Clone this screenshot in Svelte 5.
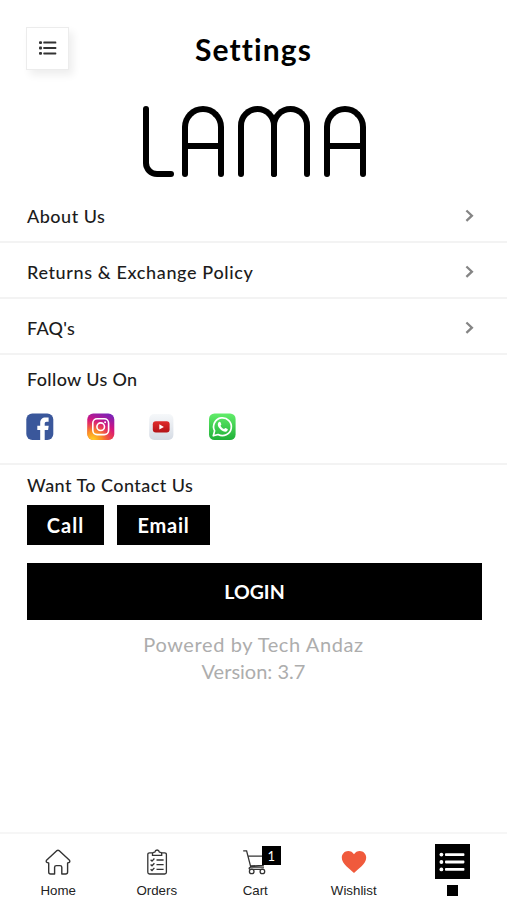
<script lang="ts">
	type Tab = { id: string; label: string; badge?: number };

	const links = [
		{ id: 'about', label: 'About Us' },
		{ id: 'returns', label: 'Returns & Exchange Policy' },
		{ id: 'faq', label: "FAQ's" }
	];

	const tabs: Tab[] = [
		{ id: 'home', label: 'Home' },
		{ id: 'orders', label: 'Orders' },
		{ id: 'cart', label: 'Cart', badge: 1 },
		{ id: 'wishlist', label: 'Wishlist' },
		{ id: 'settings', label: '' }
	];

	let activeTab = $state('settings');
</script>

<div class="screen">
	<header class="header">
		<button type="button" class="menu-btn" aria-label="Menu">
			<svg width="18" height="14" viewBox="0 0 18 14" fill="#333">
				<rect x="0" y="0.2" width="3" height="2.8" rx="1" />
				<rect x="4.3" y="0.6" width="13" height="2" rx="0.6" />
				<rect x="0" y="5.6" width="3" height="2.8" rx="1" />
				<rect x="4.3" y="6" width="13" height="2" rx="0.6" />
				<rect x="0" y="11" width="3" height="2.8" rx="1" />
				<rect x="4.3" y="11.4" width="13" height="2" rx="0.6" />
			</svg>
		</button>
		<h1 class="title">Settings</h1>
	</header>

	<div class="logo" role="img" aria-label="LAMA">
		<span class="hook"></span>
		<span class="arch barred"></span>
		<span class="double"><span class="arch narrow"></span><span class="arch narrow"></span></span>
		<span class="arch barred"></span>
	</div>

	<nav class="links">
		{#each links as link (link.id)}
			<button type="button" class="link-row">
				<span class="label link-{link.id}">{link.label}</span>
				<svg width="9" height="14" viewBox="0 0 9 14">
					<path d="M1.4 1.5 L6.9 6.7 L1.4 11.9" fill="none" stroke="#858585" stroke-width="2.3" />
				</svg>
			</button>
		{/each}
	</nav>

	<section class="follow">
		<h2 class="label follow-title">Follow Us On</h2>
		<div class="socials">
			<svg width="28" height="28" viewBox="0 0 28 28" aria-label="Facebook">
				<rect x="0.3" y="0.5" width="27" height="26.5" rx="6" fill="#3a579b" />
				<path
					d="M14.2 27 V17 H11.3 V12.8 H14.2 V10.2 C14.2 6.6 16.2 4.6 19.6 4.6 H22.6 V8.8 H20.6 C19.2 8.8 18.7 9.5 18.7 10.8 V12.8 H22.7 L22.1 17 H18.7 V27 Z"
					fill="#fff"
				/>
			</svg>
			<svg width="28" height="28" viewBox="0 0 28 28" aria-label="Instagram">
				<defs>
					<linearGradient id="ig-base" x1="0.75" y1="0" x2="0.35" y2="1">
						<stop offset="0" stop-color="#7a22b8" />
						<stop offset="0.45" stop-color="#d3147f" />
						<stop offset="1" stop-color="#f5582a" />
					</linearGradient>
					<radialGradient id="ig-glow" cx="0.2" cy="1" r="0.85">
						<stop offset="0" stop-color="#ffd428" />
						<stop offset="0.4" stop-color="#fd9a20" stop-opacity="0.85" />
						<stop offset="1" stop-color="#f02a60" stop-opacity="0" />
					</radialGradient>
				</defs>
				<rect x="0.3" y="0.5" width="27" height="26.5" rx="6" fill="url(#ig-base)" />
				<rect x="0.3" y="0.5" width="27" height="26.5" rx="6" fill="url(#ig-glow)" />
				<g fill="none" stroke="#fff" stroke-width="1.6">
					<rect x="5.8" y="5.8" width="15.8" height="15.8" rx="4.3" />
					<circle cx="13.7" cy="13.7" r="3.8" />
				</g>
				<circle cx="18.1" cy="9.2" r="1" fill="#fff" />
			</svg>
			<svg width="28" height="28" viewBox="0 0 28 28" aria-label="YouTube">
				<defs>
					<linearGradient id="yt-base" x1="0" y1="0" x2="0" y2="1">
						<stop offset="0" stop-color="#f6f8fa" />
						<stop offset="1" stop-color="#d5dbe4" />
					</linearGradient>
					<linearGradient id="yt-red" x1="0" y1="0" x2="0" y2="1">
						<stop offset="0" stop-color="#e02c2c" />
						<stop offset="1" stop-color="#b31217" />
					</linearGradient>
				</defs>
				<rect x="1.2" y="1" width="24.2" height="26" rx="5" fill="url(#yt-base)" />
				<rect x="4.8" y="8.2" width="16.8" height="11.4" rx="3" fill="url(#yt-red)" />
				<path d="M11.3 11.2 L15.9 13.9 L11.3 16.6 Z" fill="#fff" />
			</svg>
			<svg width="28" height="28" viewBox="0 0 28 28" aria-label="WhatsApp">
				<defs>
					<linearGradient id="wa-base" x1="0" y1="0" x2="0" y2="1">
						<stop offset="0" stop-color="#62ed6a" />
						<stop offset="1" stop-color="#20b038" />
					</linearGradient>
				</defs>
				<rect x="0" y="0.5" width="26.6" height="26.5" rx="5.5" fill="url(#wa-base)" />
				<path
					d="M4.3 22.8 L5.6 17.9 A8.9 8.9 0 1 1 9.1 21.5 Z"
					fill="none"
					stroke="#fff"
					stroke-width="1.7"
					stroke-linejoin="round"
				/>
				<path
					d="M10.2 8.9 C10.8 8.6 11.3 8.8 11.5 9.3 L12.3 11.2 C12.5 11.8 11.6 12.4 11.5 12.8 C12.2 14.3 13.4 15.4 15 16 C15.5 15.9 16 14.9 16.6 15.1 L18.6 16.1 C19.1 16.4 18.6 18 17.5 18.5 C14.2 19.8 8.8 14.7 8.8 11.4 C8.8 10.3 9.4 9.2 10.2 8.9 Z"
					fill="#fff"
				/>
			</svg>
		</div>
	</section>

	<section class="contact">
		<h2 class="label contact-title">Want To Contact Us</h2>
		<div class="contact-actions">
			<button type="button" class="btn call">Call</button>
			<button type="button" class="btn email">Email</button>
		</div>
		<button type="button" class="btn login">LOGIN</button>
	</section>

	<footer class="credits">
		<p class="powered">Powered by Tech Andaz</p>
		<p class="version">Version: 3.7</p>
	</footer>

	<nav class="tabbar">
		{#each tabs as tab (tab.id)}
			<button type="button" class="tab" onclick={() => (activeTab = tab.id)}>
				<span class="tab-icon" class:filled={tab.id === 'settings'}>
					{#if tab.id === 'home'}
						<svg width="26" height="26" viewBox="0 0 26 26" fill="none" stroke="#333" stroke-width="1.4" stroke-linejoin="round">
							<path
								d="M12 1.6 Q13 0.8 14 1.6 L24.5 11.2 Q25.6 13.8 22.6 13.9 V23 Q22.6 25 20.6 25 H16.8 V18.3 Q16.8 16.6 15 16.6 H11.4 Q9.6 16.6 9.6 18.3 V25 H5.6 Q3.7 25 3.7 23 V13.9 Q0.4 13.8 1.5 11.2 Z"
							/>
						</svg>
					{:else if tab.id === 'orders'}
						<svg width="26" height="26" viewBox="0 0 26 26" fill="none" stroke="#333" stroke-width="1.3">
							<path d="M8.5 3.8 H5.6 Q3.8 3.8 3.8 5.6 V23.2 Q3.8 25 5.6 25 H20.6 Q22.4 25 22.4 23.2 V5.6 Q22.4 3.8 20.6 3.8 H17.7" />
							<path d="M8.5 6.4 V4.8 Q8.5 3.2 10.8 3.2 Q11.2 1 13.1 1 Q15 1 15.4 3.2 Q17.7 3.2 17.7 4.8 V6.4 Z" />
							<path d="M12.5 11 H19.6 M12.5 15.7 H19.6 M12.5 20.4 H19.6" />
							<path d="M6.6 10.8 L8 12.1 L10.4 9.5 M6.6 15.5 L8 16.8 L10.4 14.2 M6.6 20.2 L8 21.5 L10.4 18.9" />
						</svg>
					{:else if tab.id === 'cart'}
						<svg width="26" height="26" viewBox="0 0 26 26" fill="none" stroke="#333" stroke-width="1.3">
							<path d="M1.2 1.8 H4.6 L8.8 18.2 H22 M5.8 7.2 H24.2 L21.2 16.4 L8.4 17 M8.8 18.2 Q7 18.4 7.2 19.8 Q7.4 20.4 8.8 20.4 H22" />
							<circle cx="9.7" cy="22.4" r="2.3" />
							<circle cx="20.4" cy="22.4" r="2.3" />
						</svg>
					{:else if tab.id === 'wishlist'}
						<svg width="26" height="26" viewBox="0 0 26 26">
							<path
								d="M13 24 C9 20.2 0.8 15 0.8 8.8 C0.8 4.8 3.7 2 7.2 2 C9.6 2 11.8 3.2 13 5.3 C14.2 3.2 16.4 2 18.8 2 C22.3 2 25.2 4.8 25.2 8.8 C25.2 15 17 20.2 13 24 Z"
								fill="#f05a3c"
							/>
						</svg>
					{:else}
						<svg width="26" height="20" viewBox="0 0 26 20" fill="#fff">
							<circle cx="2.4" cy="2.6" r="1.9" />
							<rect x="6" y="1.2" width="19.4" height="2.8" rx="0.8" />
							<circle cx="2.4" cy="10" r="1.9" />
							<rect x="6" y="8.6" width="19.4" height="2.8" rx="0.8" />
							<circle cx="2.4" cy="17.4" r="1.9" />
							<rect x="6" y="16" width="19.4" height="2.8" rx="0.8" />
						</svg>
					{/if}
					{#if tab.badge}
						<span class="badge">{tab.badge}</span>
					{/if}
				</span>
				{#if tab.id === activeTab}
					<span class="marker"></span>
				{:else}
					<span class="tab-label">{tab.label}</span>
				{/if}
			</button>
		{/each}
	</nav>
</div>

<style>
	:global(body) {
		background: #fff;
	}
	.screen {
		display: flex;
		flex-direction: column;
		box-sizing: border-box;
		width: 507px;
		height: 900px;
		overflow: hidden;
		background: #fff;
		color: #1c1c1c;
		font-family: Lato, 'Open Sans', sans-serif;
	}
	button {
		margin: 0;
		padding: 0;
		border: none;
		background: none;
		color: inherit;
		font: inherit;
		cursor: pointer;
	}
	h1,
	h2,
	p {
		margin: 0;
	}
	svg {
		display: block;
		flex: none;
	}

	.header {
		display: grid;
		grid-template-columns: 43px 1fr 43px;
		align-items: start;
		padding: 27px 26px 0;
		height: 79px;
	}
	.menu-btn {
		display: flex;
		align-items: center;
		justify-content: center;
		box-sizing: border-box;
		width: 43px;
		height: 43px;
		padding-bottom: 1px;
		border: 1px solid #ececec;
		background: #fff;
		box-shadow: 4px 5px 8px rgba(0, 0, 0, 0.07);
	}
	.title {
		color: #000;
		font-size: 30px;
		font-weight: 700;
		line-height: 44px;
		text-align: center;
		letter-spacing: 1.1px;
	}

	/* Wordmark: strokes with round ends, 71px tall */
	.logo {
		display: flex;
		height: 71px;
		padding-left: 143px;
	}
	.hook {
		position: relative;
		box-sizing: border-box;
		width: 28px;
		height: 68px;
		margin-top: 3px;
		margin-right: 11px;
		border: solid #000;
		border-width: 0 0 6px 6px;
		border-radius: 0 0 0 14px;
	}
	.hook::before,
	.hook::after {
		content: '';
		position: absolute;
		width: 6px;
		height: 6px;
		border-radius: 3px;
		background: #000;
	}
	.hook::before {
		top: -3px;
		left: -6px;
	}
	.hook::after {
		right: -3px;
		bottom: -6px;
	}
	.arch {
		position: relative;
		box-sizing: border-box;
		width: 42px;
		height: 68px;
		border: 6px solid #000;
		border-bottom: 0;
		border-radius: 21px 21px 0 0;
	}
	.arch::before,
	.arch::after {
		content: '';
		position: absolute;
		bottom: -3px;
		left: -6px;
		width: 6px;
		height: 8px;
		border-radius: 0 0 3px 3px;
		background: #000;
	}
	.arch::after {
		right: -6px;
		left: auto;
	}
	.barred {
		background: linear-gradient(#000, #000) 0 31px / 100% 6px no-repeat;
	}
	.narrow {
		width: 39px;
		border-radius: 19.5px 19.5px 0 0;
	}
	.narrow + .narrow {
		margin-left: -6px;
	}
	.double {
		display: flex;
		margin: 0 14px;
	}

	.links {
		display: flex;
		flex-direction: column;
		padding-top: 10px;
	}
	.link-row {
		display: flex;
		align-items: flex-start;
		justify-content: space-between;
		box-sizing: border-box;
		height: 56px;
		padding: 15px 33px 0 27px;
		border-bottom: 2px solid #f3f3f3;
	}
	.link-row svg {
		margin-top: 7px;
	}
	.label {
		font-size: 18px;
		font-weight: 500;
		line-height: 28px;
		letter-spacing: 0.5px;
	}
	.link-returns {
		letter-spacing: 0.63px;
	}
	.link-faq {
		letter-spacing: 0.25px;
	}
	.follow-title {
		padding-left: 1px;
		letter-spacing: 0.35px;
	}

	.follow {
		height: 110px;
		box-sizing: border-box;
		padding: 10px 26px 0;
		border-bottom: 2px solid #f3f3f3;
	}
	.socials {
		display: flex;
		gap: 33px;
		margin-top: 20px;
	}

	.contact {
		padding: 6px 26px 0 27px;
	}
	.contact-title {
		letter-spacing: 0.45px;
	}
	.contact-actions {
		display: flex;
		gap: 13px;
		margin-top: 6px;
	}
	.btn {
		background: #000;
		color: #fff;
		font-weight: 700;
		font-size: 20px;
	}
	.call {
		width: 77px;
		height: 40px;
		letter-spacing: 1.1px;
	}
	.email {
		width: 93px;
		height: 40px;
		letter-spacing: 0.8px;
	}
	.login {
		display: block;
		width: 455px;
		height: 57px;
		margin-top: 18px;
		font-size: 19.5px;
	}

	.credits {
		padding-top: 11px;
		color: #adadad;
		font-size: 20px;
		line-height: 27px;
		text-align: center;
	}
	.powered {
		letter-spacing: 0.6px;
	}

	.tabbar {
		display: flex;
		box-sizing: border-box;
		height: 68px;
		margin-top: auto;
		padding: 10px 6px 0 9px;
		border-top: 2px solid #f6f6f6;
	}
	.tab {
		display: flex;
		flex: none;
		flex-direction: column;
		align-items: center;
		width: 98.5px;
		font-family: 'Liberation Sans', Arial, sans-serif;
	}
	.tab-icon {
		position: relative;
		display: flex;
		align-items: center;
		justify-content: center;
		width: 35px;
		height: 35px;
	}
	.filled {
		background: #000;
	}
	.badge {
		position: absolute;
		top: 2px;
		right: -8px;
		width: 19px;
		height: 19px;
		background: #000;
		color: #fff;
		font: 13px/21px Lato, sans-serif;
		text-align: center;
	}
	.tab-label {
		margin-top: 3px;
		color: #222;
		font-size: 13.3px;
		line-height: 17px;
	}
	.marker {
		width: 11px;
		height: 11px;
		margin-top: 6px;
		background: #000;
	}
</style>
